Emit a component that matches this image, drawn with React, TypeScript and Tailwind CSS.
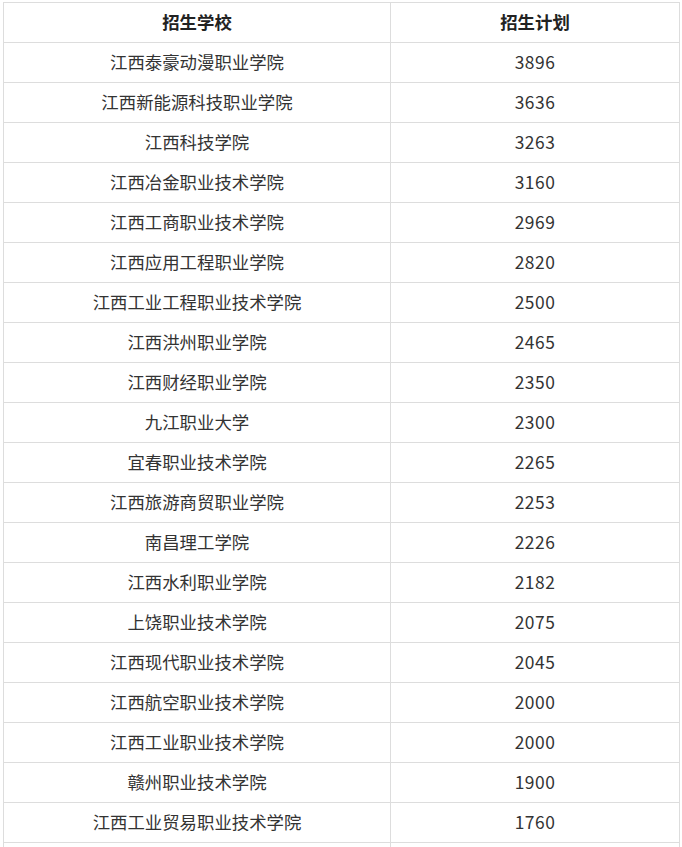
const rows: [string, string][] = [
  ['江西泰豪动漫职业学院', '3896'],
  ['江西新能源科技职业学院', '3636'],
  ['江西科技学院', '3263'],
  ['江西冶金职业技术学院', '3160'],
  ['江西工商职业技术学院', '2969'],
  ['江西应用工程职业学院', '2820'],
  ['江西工业工程职业技术学院', '2500'],
  ['江西洪州职业学院', '2465'],
  ['江西财经职业学院', '2350'],
  ['九江职业大学', '2300'],
  ['宜春职业技术学院', '2265'],
  ['江西旅游商贸职业学院', '2253'],
  ['南昌理工学院', '2226'],
  ['江西水利职业学院', '2182'],
  ['上饶职业技术学院', '2075'],
  ['江西现代职业技术学院', '2045'],
  ['江西航空职业技术学院', '2000'],
  ['江西工业职业技术学院', '2000'],
  ['赣州职业技术学院', '1900'],
  ['江西工业贸易职业技术学院', '1760'],
  ['', ''],
];

export default function App() {
  return (
    <div className="bg-white pt-[2px] pl-[3px] h-[847px] overflow-hidden font-['Microsoft_YaHei','Noto_Sans_CJK_SC',sans-serif] text-[17.4px] text-[#333]">
      <table className="w-[676px] border-collapse table-fixed">
        <colgroup>
          <col className="w-[387px]" />
          <col className="w-[289px]" />
        </colgroup>
        <thead>
          <tr className="h-[40px]">
            <th className="border border-[#dddddd] text-center font-bold text-[#222] pb-[1px]">招生学校</th>
            <th className="border border-[#dddddd] text-center font-bold text-[#222] pb-[1px]">招生计划</th>
          </tr>
        </thead>
        <tbody>
          {rows.map(([school, plan], i) => (
            <tr key={i} className="h-[40px]">
              <td className="border border-[#dddddd] text-center pb-[1px]">{school}</td>
              <td className="border border-[#dddddd] text-center pb-[1px] tracking-[0.5px]">{plan}</td>
            </tr>
          ))}
        </tbody>
      </table>
    </div>
  );
}
